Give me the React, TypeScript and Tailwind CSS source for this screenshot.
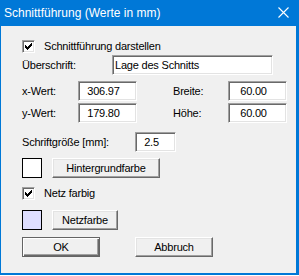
const FONT = "font-['Liberation_Sans',Arial,sans-serif]"

function Field({ value, w, align = 'center' }: { value: string; w: string; align?: 'left' | 'center' }) {
  return (
    <div
      className={`${w} h-[20px] flex items-center bg-white border border-t-[#a0a0a0] border-l-[#a0a0a0] border-r-white border-b-white shadow-[inset_1px_1px_0_#696969,inset_-1px_-1px_0_#e3e3e3] ${
        align === 'left' ? 'pl-[2px]' : 'justify-center pr-2'
      }`}
    >
      <span className="leading-none">{value}</span>
    </div>
  )
}

function Check() {
  // classic 7x7 check mark, drawn column by column
  const cols = [2, 3, 4, 3, 2, 1, 0]
  return (
    <div className="w-[13px] h-[13px] shrink-0 bg-white border border-t-[#a0a0a0] border-l-[#a0a0a0] border-r-white border-b-white shadow-[inset_1px_1px_0_#696969,inset_-1px_-1px_0_#e3e3e3] relative">
      <svg width="13" height="13" className="absolute -left-px -top-px" shapeRendering="crispEdges">
        {cols.map((y, i) => (
          <rect key={i} x={3 + i} y={3 + y} width="1" height="3" fill="#000" />
        ))}
      </svg>
    </div>
  )
}

function Button({ children, w, primary }: { children: React.ReactNode; w: string; primary?: boolean }) {
  return (
    <div
      className={`${w} h-[20px] flex items-center justify-center bg-[#f0f0f0] ${
        primary
          ? 'border border-[#646464] shadow-[inset_1px_1px_0_#fff,inset_-1px_-1px_0_#696969,inset_-2px_-2px_0_#a0a0a0]'
          : 'border border-t-white border-l-white border-r-[#696969] border-b-[#696969] shadow-[inset_-1px_-1px_0_#a0a0a0,inset_1px_1px_0_#e3e3e3]'
      }`}
    >
      <span className="leading-none">{children}</span>
    </div>
  )
}

export default function App() {
  return (
    <div className={`w-[299px] h-[276px] bg-white ${FONT}`}>
      <div className="w-[299px] h-[275px] flex flex-col border-l border-r-[3px] border-b-2 border-[#0078d7] bg-[#f0f0f0]">
        <div className="h-[26px] bg-[#0078d7] flex items-center justify-between pl-[3px] pr-[7px] text-white text-[12px]">
          <span className="leading-none">Schnittführung (Werte in mm)</span>
          <svg width="11" height="11" viewBox="0 0 11 11" className="mb-px">
            <path d="M0.5 0.5 L10.5 10.5 M10.5 0.5 L0.5 10.5" stroke="#fff" strokeWidth="1.1" />
          </svg>
        </div>

        <div className="flex flex-col pl-[21px] text-[11px] tracking-[-0.2px] text-black">
          <div className="mt-[14px] flex items-center h-[13px]">
            <Check />
            <span className="ml-[9px] leading-none">Schnittführung darstellen</span>
          </div>

          <div className="mt-[2px] flex items-center">
            <span className="w-[90px] leading-none">Überschrift:</span>
            <Field value="Lage des Schnitts" w="w-[161px]" align="left" />
          </div>

          <div className="mt-[6px] flex items-center">
            <span className="w-[56px] leading-none">x-Wert:</span>
            <Field value="306.97" w="w-[59px]" />
            <span className="ml-[36px] w-[55px] leading-none">Breite:</span>
            <Field value="60.00" w="w-[59px]" />
          </div>

          <div className="mt-[2px] flex items-center">
            <span className="w-[56px] leading-none">y-Wert:</span>
            <Field value="179.80" w="w-[59px]" />
            <span className="ml-[36px] w-[55px] leading-none">Höhe:</span>
            <Field value="60.00" w="w-[59px]" />
          </div>

          <div className="mt-[9px] flex items-center">
            <span className="w-[113px] leading-none">Schriftgröße [mm]:</span>
            <Field value="2.5" w="w-[41px]" />
          </div>

          <div className="mt-[6px] flex items-center gap-[10px]">
            <div className="w-[20px] h-[20px] border border-black bg-white" />
            <Button w="w-[108px]">Hintergrundfarbe</Button>
          </div>

          <div className="mt-[9px] flex items-center h-[13px]">
            <Check />
            <span className="ml-[9px] leading-none">Netz farbig</span>
          </div>

          <div className="mt-[10px] flex items-center gap-[10px]">
            <div className="w-[20px] h-[20px] border border-black bg-[#dedeff]" />
            <Button w="w-[66px]">Netzfarbe</Button>
          </div>

          <div className="mt-[7px] flex items-center">
            <Button w="w-[78px]" primary>OK</Button>
            <div className="ml-[35px]">
              <Button w="w-[78px]">Abbruch</Button>
            </div>
          </div>
        </div>
      </div>
    </div>
  )
}
